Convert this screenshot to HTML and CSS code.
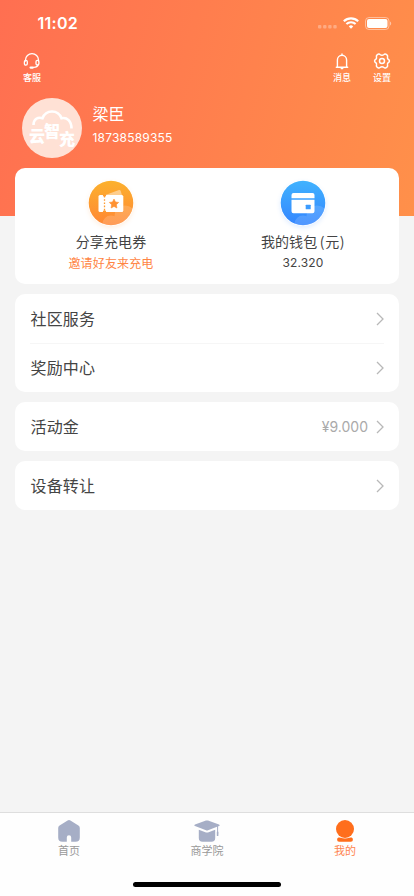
FILE: index.html
```html
<!DOCTYPE html>
<html lang="zh-CN">
<head>
<meta charset="utf-8">
<meta name="viewport" content="width=device-width, initial-scale=1">
<title>我的</title>
<link rel="stylesheet" href="styles.css">
</head>
<body>
<div class="screen">
  <header class="hero">
    <div class="status">
      <span class="clock">11:02</span>
      <div class="signals">
        <svg class="dots" width="19" height="4" viewBox="0 0 19 4"><g fill="#fff" opacity=".3"><rect width="3.4" height="3.6" rx="1"/><rect x="5.1" width="3.4" height="3.6" rx="1"/><rect x="10.2" width="3.4" height="3.6" rx="1"/><rect x="15.3" width="3.4" height="3.6" rx="1"/></g></svg>
        <svg class="wifi" width="16" height="12" viewBox="0 0 16 12" fill="none" stroke="#fff" stroke-width="2.1"><path d="M.8 4.300a10.300 10.300 0 0 1 14.400 0"/><path d="M3.400 7.100a6.600 6.600 0 0 1 9.200 0"/><path d="M8 11.700 5.800 9.400a3.200 3.200 0 0 1 4.400 0z" fill="#fff" stroke="none"/></svg>
        <svg class="battery" width="27" height="13" viewBox="0 0 27 13"><rect x=".5" y=".5" width="23.500" height="12" rx="3.500" fill="none" stroke="#fff" opacity=".45"/><rect x="2" y="2" width="20.500" height="9" rx="2" fill="#fff"/><path d="M25 4.500c1.600.6 1.600 3.400 0 4z" fill="#fff" opacity=".5"/></svg>
      </div>
    </div>
    <nav class="tools">
      <a class="tool"><svg width="18" height="18" viewBox="0 0 18 18" fill="none" stroke="#fff" stroke-width="1.300" stroke-linecap="round"><path d="M2.500 9V8a6.500 6.300 0 0 1 13 0V9M15.200 12.500c-.5 2-2 2.800-4.500 2.900"/><rect x="1.400" y="8.300" width="2.900" height="4.800" rx="1.400"/><rect x="13" y="8.300" width="2.900" height="4.800" rx="1.400"/><path d="M7.600 15.600h2.200" stroke-width="2.300"/></svg><span>客服</span></a>
      <a class="tool push"><svg width="18" height="18" viewBox="0 0 18 18" fill="none" stroke="#fff" stroke-width="1.400" stroke-linecap="round" stroke-linejoin="round"><path d="M3.300 15.200h11.400M4.400 15V8a4.600 4.700 0 0 1 9.200 0V15M9 2.700V1.900M8.200 16.600h1.600"/></svg><span>消息</span></a>
      <a class="tool"><svg width="18" height="18" viewBox="0 0 18 18" fill="none" stroke="#fff" stroke-width="1.500" stroke-linejoin="round"><path d="M5.200 2.200Q6.200 1.600 7 2.500Q9 4.100 11 2.500Q11.800 1.600 12.800 2.200L14.200 3.200Q14.900 3.800 14.500 5Q14.100 7 15.500 7.500Q16.400 8 16.400 9Q16.400 10 15.500 10.500Q14.100 11 14.500 13Q14.900 14.200 14.200 14.800L12.800 15.800Q11.800 16.400 11 15.500Q9 13.900 7 15.500Q6.200 16.400 5.200 15.800L3.800 14.800Q3.100 14.200 3.500 13Q3.900 11 2.500 10.500Q1.600 10 1.600 9Q1.600 8 2.500 7.500Q3.900 7 3.500 5Q3.100 3.800 3.800 3.200z"/><circle cx="9" cy="9" r="2.500"/></svg><span>设置</span></a>
    </nav>
    <section class="profile">
      <div class="avatar">
        <svg class="cloud" width="44" height="20" viewBox="0 0 44 20" fill="none" stroke="#fff" stroke-width="2.600"><path d="M3.500 15C3.500 9 8 6.700 12.500 8.200C16-.8 28-.8 31.500 8.200C37 7 41.500 11 41.500 18.500"/></svg>
        <div class="logo"><span>云</span><span class="mid">智</span><span class="end">充</span></div>
      </div>
      <div class="who"><div class="name">梁臣</div><div class="phone">18738589355</div></div>
    </section>
  </header>
  <main>
    <section class="card summary">
      <div class="asset">
        <svg class="badge orange" width="46" height="46" viewBox="0 0 46 46"><defs><linearGradient id="o" x2="0" y2="1"><stop stop-color="#fcb12d"/><stop offset="1" stop-color="#ff8735"/></linearGradient><clipPath id="c"><circle cx="23" cy="23" r="22.300"/></clipPath></defs><circle cx="23" cy="23" r="22.300" fill="url(#o)"/><g clip-path="url(#c)" fill="#fff" opacity=".17"><circle cx="23" cy="44" r="8.500"/><circle cx="37" cy="36" r="10.500"/></g><path d="m16 15.500 15-5.500q1.200-.4 1.600.8l1.500 4.700z" fill="#fff" opacity=".45"/><path d="M12 15h21.800a1.500 1.500 0 0 1 1.500 1.500v14a1.500 1.500 0 0 1-1.500 1.500H12a1.500 1.500 0 0 1-1.500-1.500v-14A1.500 1.500 0 0 1 12 15z" fill="#fff"/><path d="M16.500 16v15" stroke="#ff9b31" stroke-width="1.300" stroke-dasharray="1.600 1.600"/><path d="M14.800 15a1.700 1.700 0 0 0 3.400 0zM14.800 32a1.700 1.700 0 0 1 3.400 0z" fill="#ff9b31"/><path d="m26 19 1.500 3 3.200.4-2.300 2.300.5 3.300-2.900-1.600-2.900 1.600.5-3.300-2.300-2.300 3.200-.4z" fill="#ff9232" stroke="#ff9232" stroke-width=".6" stroke-linejoin="round"/></svg>
        <div class="title">分享充电券</div><div class="sub invite">邀请好友来充电</div>
      </div>
      <div class="asset">
        <svg class="badge blue" width="46" height="46" viewBox="0 0 46 46"><defs><linearGradient id="b" x2="0" y2="1"><stop stop-color="#40b2fe"/><stop offset="1" stop-color="#3485ff"/></linearGradient></defs><circle cx="23" cy="23" r="22.300" fill="url(#b)"/><g clip-path="url(#c)" fill="#fff" opacity=".14"><circle cx="23" cy="44" r="8.500"/><circle cx="37" cy="36" r="10.500"/></g><path d="M13.500 13h19a2 2 0 0 1 2 2v3.200h-23V15a2 2 0 0 1 2-2zM11.500 19.800h23v11.500a2 2 0 0 1-2 2h-19a2 2 0 0 1-2-2z" fill="#fff"/><rect x="25.700" y="24.700" width="5" height="4.600" rx=".6" fill="#3b9bff"/></svg>
        <div class="title wallet">我的钱包<span>(元)</span></div><div class="sub money">32.320</div>
      </div>
    </section>
    <section class="card">
      <div class="row"><span class="label">社区服务</span><svg class="arrow" width="8" height="14" viewBox="0 0 8 14"><path d="m1 1 6 6-6 6"/></svg></div>
      <div class="row"><span class="label">奖励中心</span><svg class="arrow" width="8" height="14" viewBox="0 0 8 14"><path d="m1 1 6 6-6 6"/></svg></div>
    </section>
    <section class="card">
      <div class="row"><span class="label">活动金</span><span class="amount">¥9.000</span><svg class="arrow" width="8" height="14" viewBox="0 0 8 14"><path d="m1 1 6 6-6 6"/></svg></div>
    </section>
    <section class="card">
      <div class="row"><span class="label">设备转让</span><svg class="arrow" width="8" height="14" viewBox="0 0 8 14"><path d="m1 1 6 6-6 6"/></svg></div>
    </section>
  </main>
  <footer class="tabbar">
    <nav class="tabs">
      <a class="tab"><svg width="26" height="24" viewBox="0 0 26 24"><path d="M11.600 1.500q1.400-.8 2.800 0l8 4.900q1.400.9 1.400 2.600v9.500q0 4.300-4.300 4.300H15.200v-4.300a2.200 2.200 0 0 0-4.400 0v4.300H6.500q-4.300 0-4.300-4.300V9q0-1.700 1.400-2.600z" fill="#a6aec6"/></svg><span>首页</span></a>
      <a class="tab"><svg width="26" height="24" viewBox="0 0 26 24" fill="#a6aec6"><path d="M12 1.600q1-.4 2 0l11 4q1.400.8 0 1.500l-11 4.200q-1 .4-2 0L1 7.100q-1.400-.7 0-1.500zM4.800 10.700l7.200 2.700q1 .4 2 0l7.200-2.700v8.300q0 3.800-3.800 3.800H8.600Q4.800 22.800 4.800 19z"/><path d="M23.600 7v8" fill="none" stroke="#a6aec6" stroke-width="1"/><rect x="22.800" y="12.500" width="1.600" height="4.500" rx=".5"/></svg><span>商学院</span></a>
      <a class="tab active"><svg width="26" height="24" viewBox="0 0 26 24" fill="#ff6e1c"><circle cx="13" cy="10" r="9"/><path d="M6.500 18.600q1-.3 2 .2 4.500 1.400 9 0 1-.5 2-.2 1.500.6 1.400 2.200 0 2-2 2H7.100q-2 0-2-2-.1-1.600 1.400-2.200z"/></svg><span>我的</span></a>
    </nav>
    <div class="home-bar"></div>
  </footer>
</div>
</body>
</html>
```
FILE: styles.css
```css
* { box-sizing: border-box; }
body { margin: 0; background: #f4f4f4; color: #444; font-family: "Noto Sans CJK SC", sans-serif; }
.screen { width: 414px; height: 896px; display: flex; flex-direction: column; overflow: hidden; }
.hero { height: 216px; flex: none; color: #fff; background: linear-gradient(105deg, #ff6f51 0%, #ff904a 100%); }
.status { height: 46px; padding: 0 22px 0 37.500px; display: flex; align-items: center; justify-content: space-between; }
.clock { font: 600 16px/20px Inter, sans-serif; letter-spacing: .25px; }
.signals { display: flex; align-items: center; }
.dots { margin: 8px 6px 0 0; }
.wifi { margin-right: 6px; }
.tools { height: 52px; padding: 6px 23px 0; display: flex; gap: 22px; }
.tool { width: 18px; display: flex; flex-direction: column; align-items: center; font-size: 9px; line-height: 12px; font-weight: 500; white-space: nowrap; }
.tool svg { flex: none; margin-bottom: 2px; }
.profile { display: flex; padding-left: 22px; }
.push { margin-left: auto; }
.avatar { width: 60px; height: 60px; border-radius: 50%; background: #ffe1d5; display: flex; flex-direction: column; align-items: center; padding-top: 12px; }
.cloud { flex: none; }
.logo { display: flex; margin-top: -10px; font-size: 16px; line-height: 20px; font-weight: 900; align-items: flex-start; }
.logo span { margin: 5px -.5px 0; }
.logo .mid { margin-top: 0; }
.logo .end { margin-top: 8px; }
.who { padding: 3px 0 0 10.500px; }
.name { font-size: 16px; line-height: 24px; }
.phone { font: 12px/16px Inter, sans-serif; letter-spacing: .2px; margin-top: 5px; }
main { flex: 1; padding: 0 15px; margin-top: -48px; display: flex; flex-direction: column; gap: 10px; }
.card { background: #fff; border-radius: 10px; padding: 0 15px; }
.summary { height: 116px; padding: 12px 0 0; display: flex; }
.asset { flex: 1; display: flex; flex-direction: column; align-items: center; }
.badge { flex: none; border-radius: 50%; }
.orange { box-shadow: 0 2px 4px #ff963625; }
.blue { box-shadow: 0 2px 4px #368dff25; }
.title { font-size: 14px; line-height: 20px; margin: 5px 0 2px; letter-spacing: .1px; }
.title span { margin-left: 2.500px; letter-spacing: .6px; }
.sub { font-size: 12px; line-height: 20px; letter-spacing: .15px; }
.invite { color: #ff8544; }
.money { font-family: Inter, sans-serif; }
.row { height: 49px; display: flex; align-items: center; font-size: 16px; }
.label { padding: 0 0 2px .5px; letter-spacing: .15px; }
.row + .row { border-top: 1px solid #f6f6f6; }
.arrow { margin-left: auto; fill: none; stroke: #b8b8b8; stroke-width: 1.300; }
.amount { margin-left: auto; color: #aaa; font: 14px/20px Inter, sans-serif; }
.amount + .arrow { margin-left: 8px; }
.tabbar { height: 84px; background: #fefefe; border-top: 1px solid #dedede; display: flex; flex-direction: column; align-items: center; }
.tabs { align-self: stretch; height: 69px; display: flex; padding-top: 6px; }
.tab { flex: 1; display: flex; flex-direction: column; align-items: center; color: #999; font-size: 11px; line-height: 15px; }
.tab svg { flex: none; }
.active { color: #ff8550; }
.home-bar { width: 148px; height: 5px; border-radius: 3px; background: #000; }
```
